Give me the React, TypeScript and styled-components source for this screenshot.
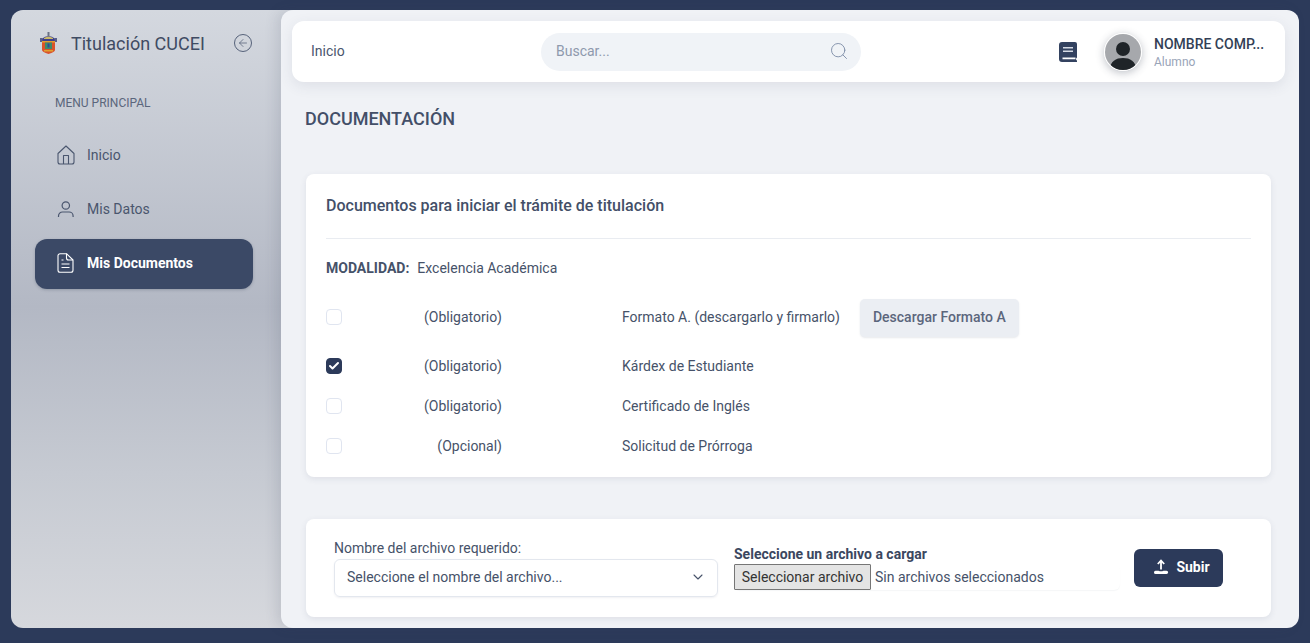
import React from "react";
import styled, { createGlobalStyle } from "styled-components";
import { ArrowLeft, Search, ChevronDown, Check } from "lucide-react";

const Global = createGlobalStyle`
  html, body { margin: 0; padding: 0; height: 100%; background: #2c3a5a; font-family: Roboto, "Liberation Sans", sans-serif; color: #3d4a63; overflow: hidden; }
  * { box-sizing: border-box; }
`;

const Frame = styled.div`
  width: 1310px; height: 643px; padding: 10px 11px 15px 11px; display: flex;
`;
const Sidebar = styled.aside`
  width: 282px; margin-right: -12px; height: 618px; flex: none; display: flex; flex-direction: column; padding: 0 40px 0 24px;
  border-radius: 12px 0 0 12px;
  background: linear-gradient(180deg, #d4d8df 0%, #b3b8c4 48%, #c6cad2 75%, #d6d8dd 100%);
`;
const Brand = styled.div`
  height: 66px; display: flex; align-items: center; padding: 0 0 0 5px;
`;
const BrandName = styled.span`
  font-size: 18px; color: #3f4b63; margin-left: 14px; flex: 1; white-space: nowrap;
`;
const Collapse = styled.span`
  width: 18px; height: 18px; margin-right: 1px; border: 1px solid #56627a; border-radius: 50%; display: flex; align-items: center; justify-content: center; color: #56627a;
`;
const MenuLabel = styled.div`
  font-size: 12px; color: #5b667c; padding-left: 20px; margin-top: 20px; line-height: 14px;
`;
const Menu = styled.nav`
  display: flex; flex-direction: column; gap: 4px; margin-top: 20px;
`;
const MenuItem = styled.a<{ $active?: boolean }>`
  height: 50px; display: flex; align-items: center; gap: 12px; padding-left: 22px; border-radius: 12px; font-size: 14px;
  color: ${(p) => (p.$active ? "#fff" : "#4a566e")};
  font-weight: ${(p) => (p.$active ? 700 : 400)};
  background: ${(p) => (p.$active ? "#3b4966" : "transparent")};
  box-shadow: ${(p) => (p.$active ? "0 1px 3px rgba(40,50,70,.25)" : "none")};
  margin-top: ${(p) => (p.$active ? "1px" : "0")};
  padding-bottom: ${(p) => (p.$active ? "2px" : "0")};
`;
const Main = styled.main`
  position: relative; width: 1018px; height: 618px; flex: none; background: #f0f2f6; border-radius: 12px; padding: 11px 14px 0 11px; overflow: hidden; display: flex; flex-direction: column;
  box-shadow: -5px 0 12px rgba(60,70,90,.13);
`;
const Header = styled.header`
  height: 61px; flex: none; background: #fff; border-radius: 12px; display: flex; align-items: center; padding: 0 19px; box-shadow: 0 4px 14px rgba(60,70,100,.1);
`;
const Crumb = styled.span`
  width: 230px; font-size: 14px; color: #4a566e; padding-bottom: 2px;
`;
const SearchBox = styled.div`
  width: 320px; height: 38px; border-radius: 19px; background: #f0f3f7; display: flex; align-items: center; justify-content: space-between; padding: 0 12px 2px 15px; font-size: 14px; color: #8e99ad;
`;
const HeaderRight = styled.div`
  margin-left: auto; display: flex; align-items: center;
`;
const Avatar = styled.span`
  width: 38px; height: 38px; border-radius: 50%; margin: 0 12px 0 27px; box-shadow: 0 2px 8px rgba(40,50,70,.3); border: 1px solid #fff; overflow: hidden; display: block; flex: none;
`;
const UserBlock = styled.div`
  margin-top: 2px; width: 112px;
`;
const UserName = styled.div`
  font-size: 14px; font-weight: 500; color: #333f56; line-height: 16px; white-space: nowrap;
`;
const UserRole = styled.div`
  font-size: 12px; color: #99a4b8; line-height: 14px; margin-top: 3px;
`;
const PageTitle = styled.h1`
  margin: 26px 0 0 13px; font-size: 18px; line-height: 21px; font-weight: 500; color: #434f68;
`;
const Card = styled.section`
  background: #fff; border-radius: 8px; margin-left: 14px; width: 965px; box-shadow: 0 2px 6px rgba(60,70,100,.1); flex: none;
`;
const DocsCard = styled(Card)`
  height: 303px; margin-top: 45px; padding: 0 20px;
`;
const CardTitle = styled.h2`
  margin: 0; height: 65px; border-bottom: 1px solid #e9ecf1; font-size: 16px; font-weight: 500; color: #434f68; line-height: 18px; padding-top: 23px;
`;
const Modality = styled.div`
  margin-top: 21px; font-size: 14px; line-height: 17px; color: #465269; display: flex; gap: 8px;
`;
const ModalityKey = styled.strong`
  font-weight: 700; font-size: 14px;
`;
const DocList = styled.div`
  margin-top: 11px; display: flex; flex-direction: column;
`;
const DocRow = styled.div<{ $tall?: boolean }>`
  height: ${(p) => (p.$tall ? "58px" : "40px")}; display: flex; align-items: center; font-size: 14px; color: #465269;
`;
const Box = styled.span<{ $on?: boolean }>`
  width: 16px; height: 16px; flex: none; border-radius: 4px; display: flex; align-items: center; justify-content: center; color: #fff;
  background: ${(p) => (p.$on ? "#2c3a5a" : "#fff")};
  border: 1px solid ${(p) => (p.$on ? "#2c3a5a" : "#e0e5f0")};
`;
const Requirement = styled.span`
  width: 160px; text-align: right; flex: none;
`;
const DocName = styled.span`
  margin-left: 120px; white-space: nowrap;
`;
const DownloadButton = styled.span`
  margin: 2px 0 0 20px; width: 159px; height: 38px; border-radius: 5px; padding-bottom: 2px; background: #ebeef3; color: #5b667c; font-size: 14px; font-weight: 500; display: flex; align-items: center; justify-content: center; box-shadow: 0 1px 2px rgba(60,70,100,.12);
`;
const UploadCard = styled(Card)`
  height: 98px; margin-top: 42px; display: flex; padding: 21px 0 0 28px;
`;
const SelectField = styled.div`
  width: 384px; flex: none; font-size: 14px; color: #465269;
`;
const FieldLabel = styled.div`
  line-height: 17px; font-size: 14px;
`;
const SelectBox = styled.div`
  height: 38px; margin-top: 2px; border: 1px solid #e3e7ee; border-radius: 6px; display: flex; align-items: center; justify-content: space-between; padding: 0 11px 2px 12px; box-shadow: 0 1px 2px rgba(60,70,100,.08);
`;
const FileField = styled.div`
  margin-left: 16px; width: 386px; flex: none; font-size: 14px; color: #465269;
`;
const FileLabel = styled.div`
  font-weight: 700; font-size: 14px; line-height: 17px; color: #3b475f; margin-top: 6px;
`;
const FileRow = styled.div`
  display: flex; align-items: center; height: 26px; margin-top: 1px; border-radius: 6px; box-shadow: 0 1px 1px rgba(60,70,100,.05);
`;
const FileButton = styled.span`
  width: 137px; height: 26px; flex: none; background: #e4e4e4; border: 1px solid #767676; border-radius: 1px; font-size: 14px; color: #333; display: flex; align-items: center; justify-content: center; padding-bottom: 1px;
`;
const FileStatus = styled.span`
  margin-left: 4px; padding-bottom: 1px;
`;
const UploadButton = styled.span`
  margin: 9px 0 0 14px; width: 89px; height: 38px; background: #2c3a5a; color: #fff; border-radius: 6px; font-size: 14px; font-weight: 700; display: flex; align-items: center; justify-content: center; gap: 7px; padding: 0 0 2px 6px;
`;

const Crest = () => (
  <svg width="17" height="22" viewBox="0 0 17 22">
    <rect x="7.5" y="0" width="2" height="4" fill="#6b7285" />
    <path d="M1.5 7 Q8.5 1 15.5 7 L15.5 9 L1.5 9 Z" fill="#3d3f8f" />
    <path d="M4 6 Q8.5 3 13 6 L13 7 L4 7 Z" fill="#c9b96a" />
    <path d="M0 6h2.5v4H0zM14.5 6H17v4h-2.5z" fill="#59608a" />
    <path d="M2 9h13v9q0 2-6.500 4q-6.500-2-6.500-4z" fill="#d9532b" />
    <path d="M2 9h13v1.500H2z" fill="#e0a030" />
    <rect x="5" y="10.500" width="7" height="6.500" fill="#3f8a6a" />
    <rect x="7.500" y="11.500" width="2" height="4" fill="#2c4a9a" />
    <path d="M4 18h9v1.500H4z" fill="#e0a030" />
  </svg>
);

const HomeIcon = () => (
  <svg width="18" height="20" viewBox="0 0 18 20" fill="none" stroke="currentColor" strokeWidth="1.1" strokeLinejoin="round">
    <path d="M1 8.500 9 1l8 7.500V17a2 2 0 0 1-2 2H3a2 2 0 0 1-2-2Z" />
    <path d="M6.500 19v-8.500h5V19" />
  </svg>
);

const PersonIcon = () => (
  <svg width="18" height="20" viewBox="0 0 18 20" fill="none" stroke="currentColor" strokeWidth="1.2">
    <circle cx="8.800" cy="6.500" r="3.700" />
    <path d="M1.500 18v-1a4 4 0 0 1 4-4h6.600a4 4 0 0 1 4 4v1" />
  </svg>
);

const DocIcon = () => (
  <svg width="18" height="20" viewBox="0 0 18 20" fill="none" stroke="currentColor" strokeWidth="1.1" strokeLinejoin="round">
    <path d="M3 .700h6.500L16 7v10.300a2 2 0 0 1-2 2H3a2 2 0 0 1-2-2V2.700a2 2 0 0 1 2-2Z" />
    <path d="M9.500 .700V5a2 2 0 0 0 2 2H16M4.500 7h2M4.500 11h8M4.500 14.500h8" />
  </svg>
);

const BookIcon = () => (
  <svg width="18" height="20" viewBox="0 0 18 20">
    <path d="M3 0h13a2 2 0 0 1 2 2v13q0 1-1 1.500v1q1 .5 1 1.500v1H3a3 3 0 0 1-3-3V3a3 3 0 0 1 3-3Z" fill="#334260" />
    <path d="M4 5h10v1.500H4zM4 8.500h10V10H4z" fill="#d6dbe5" />
    <path d="M3.500 15.500h13v1.800h-13z" fill="#fff" />
  </svg>
);

const AvatarArt = () => (
  <svg width="36" height="36" viewBox="0 0 36 36">
    <rect width="36" height="36" fill="#a6a8ac" />
    <circle cx="18" cy="15" r="7" fill="#1f2428" />
    <path d="M5 36c0-9 6-12 13-12s13 3 13 12z" fill="#1f2428" />
  </svg>
);

const UploadIcon = () => (
  <svg width="16" height="16" viewBox="0 0 16 16" fill="none">
    <path d="M8 10.500V1.500M4.800 5 8 1.500 11.200 5" stroke="#fff" strokeWidth="1.800" />
    <path d="M1 13.200a1.500 1.500 0 0 1 1.500-1.500h3q2.500 1.300 5 0h3a1.500 1.500 0 0 1 0 3.300h-11A1.500 1.500 0 0 1 1 13.200Z" fill="#fff" />
  </svg>
);

const docs = [
  { on: false, req: "(Obligatorio)", name: "Formato A. (descargarlo y firmarlo)", tall: true },
  { on: true, req: "(Obligatorio)", name: "Kárdex de Estudiante", tall: false },
  { on: false, req: "(Obligatorio)", name: "Certificado de Inglés", tall: false },
  { on: false, req: "(Opcional)", name: "Solicitud de Prórroga", tall: false },
];

export default function App() {
  return (
    <Frame>
      <Global />
      <Sidebar>
        <Brand>
          <Crest />
          <BrandName>Titulación CUCEI</BrandName>
          <Collapse><ArrowLeft size={12} strokeWidth={1.5} /></Collapse>
        </Brand>
        <MenuLabel>MENU PRINCIPAL</MenuLabel>
        <Menu>
          <MenuItem><HomeIcon />Inicio</MenuItem>
          <MenuItem><PersonIcon />Mis Datos</MenuItem>
          <MenuItem $active><DocIcon />Mis Documentos</MenuItem>
        </Menu>
      </Sidebar>
      <Main>
        <Header>
          <Crumb>Inicio</Crumb>
          <SearchBox>Buscar...<Search size={20} strokeWidth={1.1} color="#7d8ca6" /></SearchBox>
          <HeaderRight>
            <BookIcon />
            <Avatar><AvatarArt /></Avatar>
            <UserBlock>
              <UserName>NOMBRE COMP...</UserName>
              <UserRole>Alumno</UserRole>
            </UserBlock>
          </HeaderRight>
        </Header>
        <PageTitle>DOCUMENTACIÓN</PageTitle>
        <DocsCard>
          <CardTitle>Documentos para iniciar el trámite de titulación</CardTitle>
          <Modality><ModalityKey>MODALIDAD:</ModalityKey> Excelencia Académica</Modality>
          <DocList>
            {docs.map((d) => (
              <DocRow key={d.name} $tall={d.tall}>
                <Box $on={d.on}>{d.on && <Check size={12} strokeWidth={4} />}</Box>
                <Requirement>{d.req}</Requirement>
                <DocName>{d.name}</DocName>
                {d.tall && <DownloadButton>Descargar Formato A</DownloadButton>}
              </DocRow>
            ))}
          </DocList>
        </DocsCard>
        <UploadCard>
          <SelectField>
            <FieldLabel>Nombre del archivo requerido:</FieldLabel>
            <SelectBox>Seleccione el nombre del archivo...<ChevronDown size={16} strokeWidth={1.6} /></SelectBox>
          </SelectField>
          <FileField>
            <FileLabel>Seleccione un archivo a cargar</FileLabel>
            <FileRow>
              <FileButton>Seleccionar archivo</FileButton>
              <FileStatus>Sin archivos seleccionados</FileStatus>
            </FileRow>
          </FileField>
          <UploadButton><UploadIcon />Subir</UploadButton>
        </UploadCard>
      </Main>
    </Frame>
  );
}
